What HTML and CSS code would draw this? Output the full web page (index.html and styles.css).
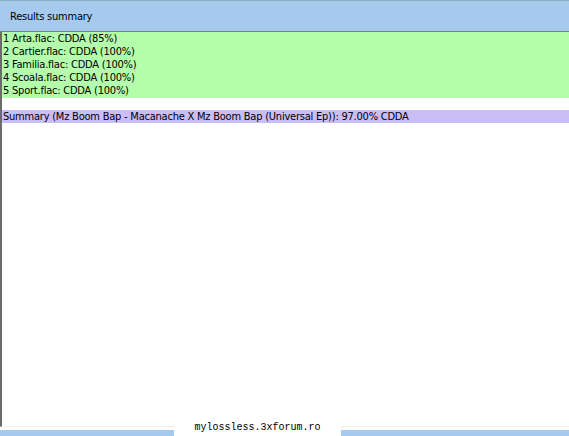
FILE: index.html
```html
<!DOCTYPE html>
<html lang="en">
<head>
    <meta charset="UTF-8">
    <title>Results summary</title>
    <link rel="stylesheet" href="styles.css">
</head>
<body>
    <!-- Header -->
    <div class="header">Results summary</div>

    <!-- Report -->
    <div class="report">
        <div class="tracks">
            <div class="line">1 Arta.flac: CDDA (85%)</div>
            <div class="line">2 Cartier.flac: CDDA (100%)</div>
            <div class="line">3 Familia.flac: CDDA (100%)</div>
            <div class="line">4 Scoala.flac: CDDA (100%)</div>
            <div class="line">5 Sport.flac: CDDA (100%)</div>
        </div>
        <div class="gap"></div>
        <div class="line summary">Summary (Mz Boom Bap - Macanache X Mz Boom Bap (Universal Ep)): 97.00% CDDA</div>
    </div>

    <!-- Footer strip -->
    <div class="footer">
        <span class="footer-bar left"></span>
        <span class="mark">mylossless.3xforum.ro</span>
        <span class="footer-bar"></span>
    </div>
</body>
</html>
```

FILE: styles.css
```css
body {
    margin: 0;
    width: 569px;
    height: 436px;
    overflow: hidden;
    background: white;
    font-family: 'DejaVu Sans Condensed', 'DejaVu Sans', sans-serif;
    font-size: 11px;
    letter-spacing: -0.22px;
    color: black;
    display: flex;
    flex-direction: column;
}

/* Header */
.header {
    height: 30px;
    line-height: 32px;
    padding-left: 10px;
    background: #a6c9ee;
    border-top: 1px solid #8ea9c4;
    border-bottom: 1px solid #6f8092;
}

/* Report area */
.report {
    flex: 1;
    border-left: 2px solid #6b6b6b;
    border-bottom: 1px solid #f6efdf;
    margin-bottom: 3px;
    display: flex;
    flex-direction: column;
}

.tracks {
    background: #b3fdab;
    padding-bottom: 1px;
}

.line {
    height: 13px;
    line-height: 13px;
    padding-left: 1px;
    white-space: nowrap;
}

.gap {
    height: 12px;
}

.summary {
    background: #cbbdf6;
}

/* Footer */
.footer {
    display: flex;
    align-items: flex-end;
    height: 6px;
}

.footer-bar {
    flex: 1;
    height: 6px;
    background: #a6c9ee;
}

.footer-bar.left {
    flex: none;
    width: 174px;
}

.mark {
    flex: none;
    width: 167px;
    height: 16px;
    line-height: 15px;
    background: white;
    text-align: center;
    letter-spacing: 0;
    font-family: 'Liberation Mono', 'Courier New', monospace;
    font-size: 10px;
}
```
